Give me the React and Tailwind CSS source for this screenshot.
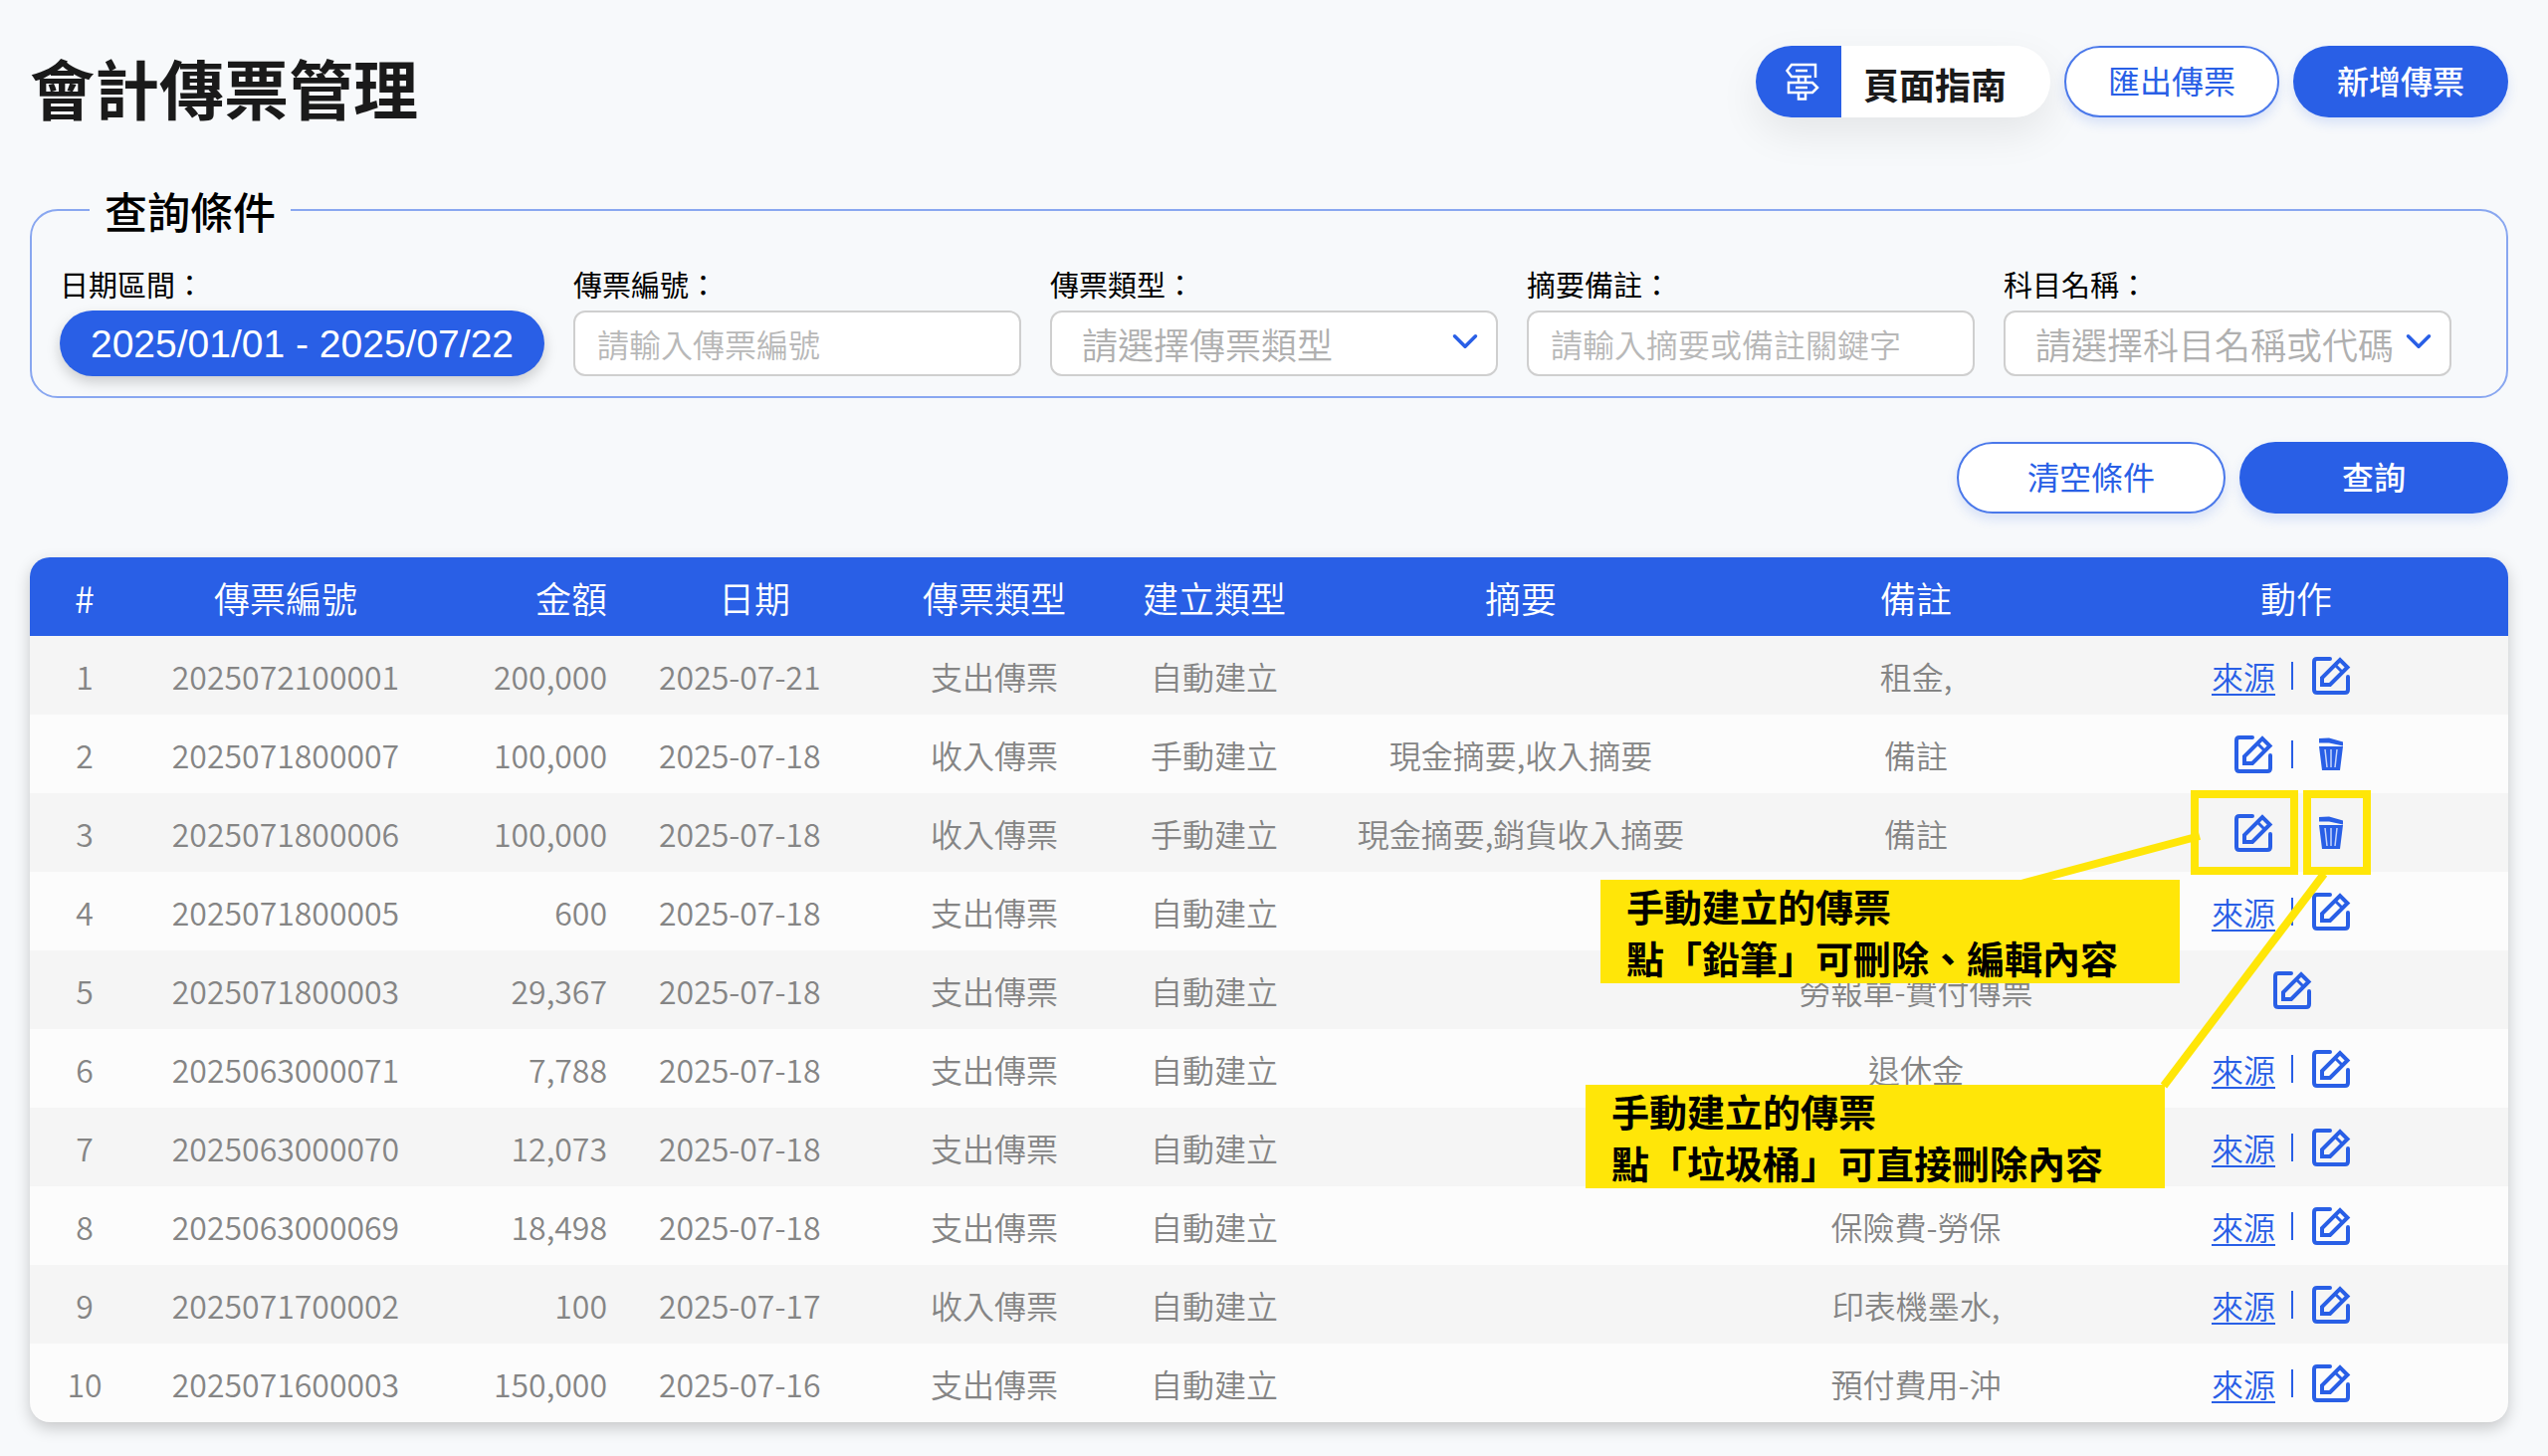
import React from 'react';
import { ChevronDown } from 'lucide-react';

const columns = [
  { label: '#', width: 'w-[110px]', align: 'text-center' },
  { label: '傳票編號', width: 'w-[294px]', align: 'text-center' },
  { label: '金額', width: 'w-[202px]', align: 'text-right' },
  { label: '日期', width: 'w-[244px]', align: 'text-center' },
  { label: '傳票類型', width: 'w-[238px]', align: 'text-center' },
  { label: '建立類型', width: 'w-[204px]', align: 'text-center' },
  { label: '摘要', width: 'w-auto', align: 'text-center' },
  { label: '備註', width: 'w-[382px]', align: 'text-center' },
  { label: '動作', width: 'w-[404px]', align: 'text-center' },
];

const vouchers = [
  { no: '2025072100001', amount: '200,000', date: '2025-07-21', type: '支出傳票', source: '自動建立', summary: '', note: '租金,', actions: 'source' },
  { no: '2025071800007', amount: '100,000', date: '2025-07-18', type: '收入傳票', source: '手動建立', summary: '現金摘要,收入摘要', note: '備註', actions: 'manual' },
  { no: '2025071800006', amount: '100,000', date: '2025-07-18', type: '收入傳票', source: '手動建立', summary: '現金摘要,銷貨收入摘要', note: '備註', actions: 'manual' },
  { no: '2025071800005', amount: '600', date: '2025-07-18', type: '支出傳票', source: '自動建立', summary: '', note: '', actions: 'source' },
  { no: '2025071800003', amount: '29,367', date: '2025-07-18', type: '支出傳票', source: '自動建立', summary: '', note: '勞報單-實付傳票', actions: 'edit' },
  { no: '2025063000071', amount: '7,788', date: '2025-07-18', type: '支出傳票', source: '自動建立', summary: '', note: '退休金', actions: 'source' },
  { no: '2025063000070', amount: '12,073', date: '2025-07-18', type: '支出傳票', source: '自動建立', summary: '', note: '', actions: 'source' },
  { no: '2025063000069', amount: '18,498', date: '2025-07-18', type: '支出傳票', source: '自動建立', summary: '', note: '保險費-勞保', actions: 'source' },
  { no: '2025071700002', amount: '100', date: '2025-07-17', type: '收入傳票', source: '自動建立', summary: '', note: '印表機墨水,', actions: 'source' },
  { no: '2025071600003', amount: '150,000', date: '2025-07-16', type: '支出傳票', source: '自動建立', summary: '', note: '預付費用-沖', actions: 'source' },
];

const App = () => {
  return (
    <div className="min-h-screen bg-[#f7f9fb] pt-[46px] pr-10 pb-8 pl-[30px] font-['Noto_Sans_CJK_TC',sans-serif] text-black">
      <header className="flex items-start justify-between">
        <h1 className="text-[65px] leading-[82px] font-bold text-[#1a1a1a]">會計傳票管理</h1>
        <div className="flex gap-[14px]">
          <button type="button" className="flex h-[72px] w-[296px] cursor-pointer overflow-hidden rounded-full bg-white shadow-[0_16px_40px_rgba(0,0,0,0.08)]">
            <span className="flex h-full w-[86px] items-center justify-center bg-[#295fe6] pl-2 text-white">
              <SignpostIcon />
            </span>
            <span className="flex h-full flex-1 items-center pt-1 pl-[22px] text-[36px] leading-none font-bold text-[#1a1a1a]">頁面指南</span>
          </button>
          <PillButton outline width="w-[216px]">匯出傳票</PillButton>
          <PillButton width="w-[216px]">新增傳票</PillButton>
        </div>
      </header>

      <fieldset className="mt-[51px] rounded-[28px] border-2 border-[#89a7f0] px-7 pb-5">
        <legend className="ml-[30px] px-[15px] text-[43px] leading-[64px] font-medium">查詢條件</legend>
        <div className="mt-[22px] flex gap-[29px]">
          <div className="w-[487px]">
            <label htmlFor="range" className="block text-[29px] leading-10">日期區間：</label>
            <button id="range" type="button" className="mt-[7px] h-[66px] w-full cursor-pointer rounded-full bg-[#295fe6] font-['Liberation_Sans',sans-serif] text-[39px] leading-none whitespace-nowrap text-white shadow-[0_6px_14px_rgba(0,0,0,0.18)]">
              2025/01/01 - 2025/07/22
            </button>
          </div>
          <TextField id="voucher-no" label="傳票編號：" placeholder="請輸入傳票編號" />
          <SelectField id="voucher-type" label="傳票類型：" placeholder="請選擇傳票類型" />
          <TextField id="summary" label="摘要備註：" placeholder="請輸入摘要或備註關鍵字" />
          <SelectField id="subject" label="科目名稱：" placeholder="請選擇科目名稱或代碼" />
        </div>
      </fieldset>

      <div className="mt-11 flex justify-end gap-[14px]">
        <PillButton outline width="w-[270px]">清空條件</PillButton>
        <PillButton width="w-[270px]">查詢</PillButton>
      </div>

      <section className="relative mt-11">
        <div className="overflow-hidden rounded-[20px] bg-[#fcfcfc] shadow-[0_6px_16px_rgba(0,0,0,0.20)]">
          <table className="w-full table-fixed border-collapse">
            <thead className="bg-[#295fe6] text-white">
              <tr className="h-[79px]">
                {columns.map((col) => (
                  <th key={col.label} className={`${col.width} ${col.align} px-[26px] text-[36px] leading-none font-[350] whitespace-nowrap last:pr-12`}>
                    {col.label}
                  </th>
                ))}
              </tr>
            </thead>
            <tbody className="text-[32px] leading-none font-[350] whitespace-nowrap text-[#858585]">
              {vouchers.map((row, index) => (
                <tr key={row.no} className="h-[79px] odd:bg-[#f5f5f5]">
                  <td className="text-center">{index + 1}</td>
                  <td className="text-center">{row.no}</td>
                  <td className="px-[26px] text-right">{row.amount}</td>
                  <td className="px-[26px]">{row.date}</td>
                  <td className="text-center">{row.type}</td>
                  <td className="text-center">{row.source}</td>
                  <td className="text-center">{row.summary}</td>
                  <td className="text-center">{row.note}</td>
                  <td className="pr-[30px]"><RowActions kind={row.actions} /></td>
                </tr>
              ))}
            </tbody>
          </table>
        </div>

        {/* tutorial highlights and callouts */}
        <div className="pointer-events-none absolute top-[234px] right-[211px] h-[85px] w-[108px] border-8 border-[#ffe608]" />
        <div className="pointer-events-none absolute top-[234px] right-[138px] h-[85px] w-[68px] border-8 border-[#ffe608]" />
        <svg className="pointer-events-none absolute top-[234px] right-[138px] h-[320px] w-[360px]" viewBox="0 0 360 320" fill="none" stroke="#ffe608" strokeWidth="8">
          <path d="M188 46 L5 95" />
          <path d="M313 84 L152 297" />
        </svg>
        <Callout position="top-[324px] right-[330px]" lines={['手動建立的傳票', '點「鉛筆」可刪除、編輯內容']} />
        <Callout position="top-[530px] right-[345px]" lines={['手動建立的傳票', '點「垃圾桶」可直接刪除內容']} />
      </section>
    </div>
  );
};

const PillButton = ({ children, outline, width }) => (
  <button
    type="button"
    className={`${width} ${outline ? 'border-2 border-[#4a78ea] bg-white font-normal text-[#295fe6]' : 'bg-[#295fe6] font-medium text-white'} h-[72px] cursor-pointer rounded-full pb-1 text-[32px] leading-none shadow-[0_6px_12px_rgba(41,95,230,0.15)]`}
  >
    {children}
  </button>
);

const TextField = ({ id, label, placeholder }) => (
  <div className="w-[450px]">
    <label htmlFor={id} className="block text-[29px] leading-10">{label}</label>
    <input
      id={id}
      type="text"
      placeholder={placeholder}
      className="mt-[7px] block h-[66px] w-full rounded-xl border-2 border-[#cfcfcf] bg-white px-[22px] text-[32px] font-[350] placeholder:text-[#b8b8b8]"
    />
  </div>
);

const SelectField = ({ id, label, placeholder }) => (
  <div className="w-[450px]">
    <label htmlFor={id} className="block text-[29px] leading-10">{label}</label>
    <div className="relative mt-[7px]">
      <select id={id} className="block h-[66px] w-full appearance-none rounded-xl border-2 border-[#cfcfcf] bg-white pl-[30px] text-[36px] font-[350] text-[#b0b0b0]">
        <option>{placeholder}</option>
      </select>
      <ChevronDown size={42} strokeWidth={2} className="pointer-events-none absolute top-[10px] right-3 text-[#295fe6]" />
    </div>
  </div>
);

const RowActions = ({ kind }) => {
  if (kind === 'edit') {
    return (
      <div className="flex justify-center text-[#295fe6]">
        <IconButton label="編輯"><EditIcon /></IconButton>
      </div>
    );
  }
  return (
    <div className="grid grid-cols-[1fr_2px_1fr] items-center gap-4 text-[#295fe6]">
      <div className="flex justify-end">
        {kind === 'manual'
          ? <IconButton label="編輯"><EditIcon /></IconButton>
          : <a href="#source" className="underline decoration-2 underline-offset-4">來源</a>}
      </div>
      <span className="h-7 bg-[#295fe6]" />
      <div className="flex">
        {kind === 'manual'
          ? <IconButton label="刪除"><TrashIcon /></IconButton>
          : <IconButton label="編輯"><EditIcon /></IconButton>}
      </div>
    </div>
  );
};

const IconButton = ({ label, children }) => (
  <button type="button" aria-label={label} className="size-11 cursor-pointer">{children}</button>
);

const Callout = ({ position, lines }) => (
  <div className={`${position} absolute h-[104px] w-[582px] bg-[#ffe608] pl-[26px] text-[38px] leading-[52px] font-bold whitespace-nowrap`}>
    {lines.map((line) => (
      <p key={line}>{line}</p>
    ))}
  </div>
);

const EditIcon = () => (
  <svg className="size-11" viewBox="0 0 44 44" fill="none" stroke="currentColor" strokeWidth="4" strokeLinejoin="round">
    <path d="M21 5 H8 Q5 5 5 8 V36 Q5 39 8 39 H36 Q39 39 39 36 V23" strokeLinecap="round" />
    <path d="M13 31 V24 L31 6 L38.500 13.500 L21 31 Z" strokeLinejoin="miter" />
    <path d="M26 11 L33.500 18.500" strokeWidth="3" />
  </svg>
);

const TrashIcon = () => (
  <svg className="size-11" viewBox="0 0 44 44" fill="currentColor">
    <path d="M10 6 L20 5.500 L34 9.500 V13.500 L20 10.500 H10 Z" />
    <path d="M10 14 H34 L31 38 H13 Z" />
    <path d="M16 17 L18 35 M22 17 V35 M28 17 L26 35" stroke="#c5d4fa" strokeWidth="1.500" />
  </svg>
);

const SignpostIcon = () => (
  <svg className="size-10" viewBox="0 0 40 40" fill="none" stroke="currentColor" strokeWidth="2.500">
    <path d="M33 16 V3 H9 L4.500 9 L9 15 H29" />
    <path d="M6 21 H30 L35 26 L30 31 H6 Z" />
    <path d="M16 15 V21 M23 15 V21 M16 31 V37.500 H23 V31" />
    <path d="M13 9 H25 M13 26 H25" />
  </svg>
);

export default App;
